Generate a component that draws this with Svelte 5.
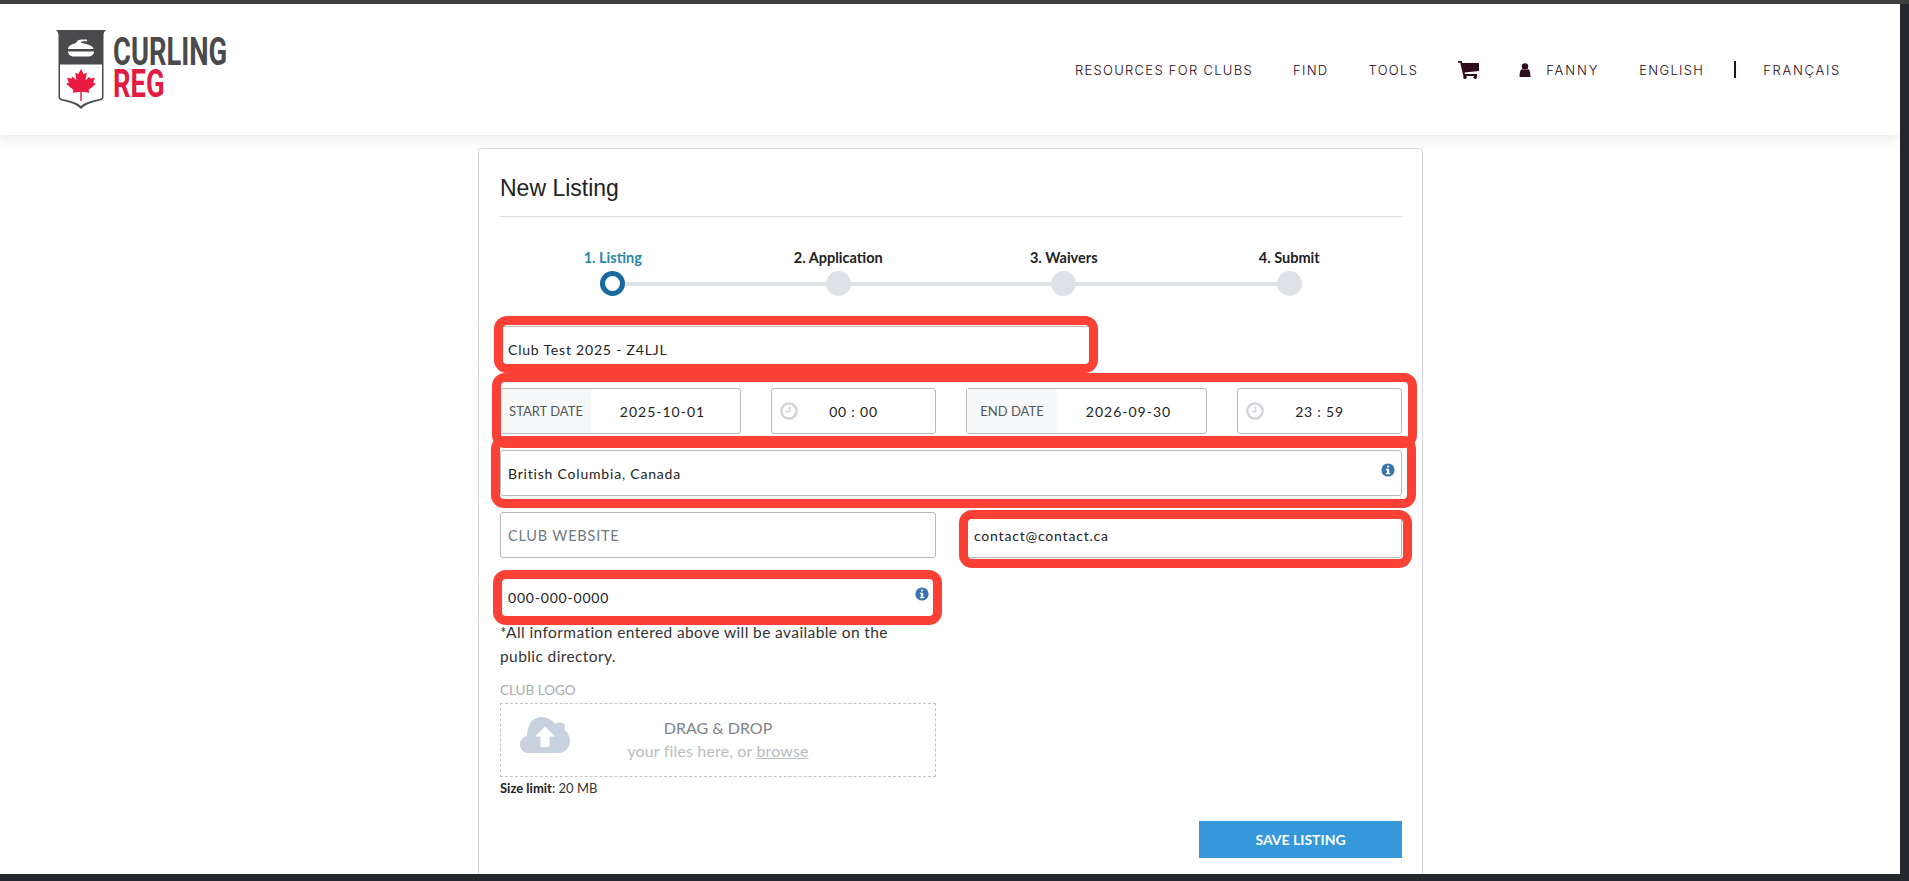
<script>
  const steps = ["1. Listing", "2. Application", "3. Waivers", "4. Submit"];
  const leaf =
    "25,39 27.8,44.2 30.8,42.6 29.5,50.6 33.3,46.6 34.2,48.6 38.9,47.8 37.2,52.7 40,53.8 32.5,60 33.4,62.7 25.7,61.8 25.7,71 24.3,71 24.3,61.8 16.6,62.7 17.5,60 10,53.8 12.8,52.7 11.1,47.8 15.8,48.6 16.7,46.6 20.5,50.6 19.2,42.6 22.2,44.2";
</script>

{#snippet clock()}
  <svg class="clock" viewBox="0 0 18 18" aria-hidden="true">
    <circle cx="9" cy="9" r="7.6" fill="none" stroke="#cdd1d5" stroke-width="2.2" />
    <path d="M9.600 4.500V9.600H5.500" fill="none" stroke="#cdd1d5" stroke-width="1.400" />
  </svg>
{/snippet}

{#snippet info()}
  <svg class="info" viewBox="0 0 14 14" aria-hidden="true">
    <circle cx="7" cy="7" r="6.600" fill="#3a74ae" />
    <rect x="5.900" y="2.400" width="2.200" height="2.200" rx="1" fill="#fff" />
    <path d="M4.900 5.700H8.200V9.900H9.200V11.300H4.900V9.900H5.900V7.100H4.900z" fill="#fff" />
  </svg>
{/snippet}

<div class="window">
  <div class="topbar"></div>
  <div class="page">
    <header>
      <a class="logo" href="#top">
        <svg width="50" height="80" viewBox="0 0 50 80" aria-hidden="true">
          <path
            d="M0 0H50c-1.500 1-2.500 3-2.500 5v62c0 2-1 3-3 3.500-7 1.500-14 3-19.500 8.500-5.500-5.500-12.500-7-19.500-8.500-2-.5-3-1.500-3-3.500V5C2.500 3 1.500 1 0 0z"
            fill="#4a4a4d" />
          <path
            d="M4 34.500H46V66.500c0 1.500-.7 2-2 2.500-7 1.500-14 2.500-19 7-5-4.500-12-5.500-19-7-1.300-.5-2-1-2-2.500z"
            fill="#fff" />
          <path
            d="M12 19c0-3 4-5 8-6 1-2.500 3-3.500 6-3.500h5v1.800h-4c-1.500 0-2 1-2 1.700 5 .5 12.500 2.800 12.500 6z"
            fill="#fff" />
          <path d="M12 21.500H38c0 3-3 5-6 5H18c-3 0-6-2-6-5z" fill="#fff" />
          <polygon points={leaf} fill="#e9193f" />
        </svg>
        <div class="wordmark">
          <span class="curling">CURLING</span>
          <span class="reg">REG</span>
        </div>
      </a>
      <nav>
        <a href="#top">RESOURCES FOR CLUBS</a>
        <a href="#top">FIND</a>
        <a href="#top">TOOLS</a>
        <svg class="cart" viewBox="0 0 21 18" aria-hidden="true">
          <path
            d="M0 0H3.600L4.300 2H21V10L6.600 11.500 7 13H19V15H5.400L2.200 1.800H0z"
            fill="#2f0c1d" />
          <circle cx="7" cy="16.300" r="1.700" fill="#2f0c1d" />
          <circle cx="17.300" cy="16.300" r="1.700" fill="#2f0c1d" />
        </svg>
        <a class="user" href="#top">
          <svg viewBox="0 0 12 14" aria-hidden="true">
            <circle cx="6" cy="3.500" r="3.200" fill="#2f0c1d" />
            <path d="M3 6C1 7 .5 10 .5 14H11.500C11.500 10 11 7 9 6 7.500 7.300 4.500 7.300 3 6z" fill="#2f0c1d" />
          </svg>
          FANNY
        </a>
        <div class="lang">
          <a href="#top">ENGLISH</a>
          <span class="sep"></span>
          <a class="fr" href="#top">FRANÇAIS</a>
        </div>
      </nav>
    </header>

    <main class="card">
      <h1>New Listing</h1>
      <div class="steps">
        {#each steps as step, i}
          <div class="step" class:active={i === 0}>
            <div class="step-label">{step}</div>
            <div class="dot"></div>
          </div>
        {/each}
      </div>

      <div class="form">
        <div class="field title-field mark mark-title">Club Test 2025 - Z4LJL</div>

        <div class="dates mark mark-dates">
          <div class="pair">
            <div class="field date">
              <span class="addon">START DATE</span>
              <span class="value">2025-10-01</span>
            </div>
            <div class="field time">{@render clock()}<span>00 : 00</span></div>
          </div>
          <div class="pair">
            <div class="field date">
              <span class="addon">END DATE</span>
              <span class="value">2026-09-30</span>
            </div>
            <div class="field time">{@render clock()}<span>23 : 59</span></div>
          </div>
        </div>

        <div class="field mark mark-location">British Columbia, Canada{@render info()}</div>

        <div class="two">
          <div class="field placeholder">CLUB WEBSITE</div>
          <div class="field mark mark-email">contact@contact.ca</div>
        </div>

        <div class="two">
          <div class="field mark mark-phone">000-000-0000{@render info()}</div>
        </div>
      </div>

      <div class="lower">
        <p class="note">*All information entered above will be available on the public directory.</p>
        <div class="logo-label">CLUB LOGO</div>
        <div class="drop">
          <svg class="cloud" viewBox="0 0 50 36" aria-hidden="true">
            <path
              d="M8 36C3 36 0 32 0 27.500 0 23 3 20 7 19 7 8 13 0 21 0 27 0 32 3 35 7 36 6 38 5.500 40 5.500 44 5.500 46 9 44.500 13 47.500 15 50 19 50 24 50 31 45 36 39 36z"
              fill="#c8d2de" />
            <path d="M25 9.500L35 19.500H29.500V30H20.500V19.500H15z" fill="#fff" />
          </svg>
          <div class="drag">DRAG &amp; DROP</div>
          <div class="browse">your files here, or <u>browse</u></div>
        </div>
        <div class="limit"><b>Size limit</b>: 20 MB</div>
      </div>

      <div class="actions">
        <button>SAVE LISTING</button>
      </div>
    </main>
  </div>
  <div class="scrollbar"></div>
  <div class="bottombar"></div>
</div>

<style>
  :global(body) {
    overflow: hidden;
    background: #fff;
  }

  .window {
    display: grid;
    grid-template-columns: 1fr 9px;
    grid-template-rows: 4px 870px 7px;
    height: 881px;
    font-family: Lato, "Noto Sans", sans-serif;
    color: #222;
  }

  .topbar {
    grid-column: 1 / 3;
    background: #3e3e3e;
  }

  .page {
    overflow: hidden;
    background: #fff;
  }

  .scrollbar {
    background: #24282c;
  }

  .bottombar {
    grid-column: 1 / 3;
    background: #24282c;
  }

  header {
    height: 131px;
    padding: 0 59px 0 56px;
    display: flex;
    align-items: center;
    justify-content: space-between;
    background: #fff;
    box-shadow: 0 2px 14px rgba(0, 0, 0, 0.1);
    position: relative;
  }

  .logo {
    display: flex;
    align-items: center;
    gap: 7px;
    text-decoration: none;
  }

  .wordmark {
    display: flex;
    flex-direction: column;
    margin-top: -3px;
    width: 114px;
    font-family: Roboto, sans-serif;
    font-weight: 700;
    font-size: 38px;
    line-height: 32px;
  }

  .wordmark span {
    display: block;
    transform: scaleX(0.72);
    transform-origin: left center;
    white-space: nowrap;
  }

  .curling {
    color: #4a4a4d;
  }

  .reg {
    color: #e31b41;
  }

  nav {
    display: flex;
    align-items: center;
    gap: 40px;
    font-family: Inter, sans-serif;
    font-weight: 300;
    font-size: 13px;
    letter-spacing: 1.3px;
    color: #1f0712;
  }

  nav a {
    color: inherit;
    text-decoration: none;
    white-space: nowrap;
  }

  .cart {
    width: 21px;
    height: 18px;
  }

  .user {
    display: flex;
    align-items: center;
    gap: 15px;
    letter-spacing: 1.9px;
  }

  .user svg {
    width: 12px;
    height: 14px;
  }

  .lang {
    display: flex;
    align-items: center;
    gap: 30px;
  }

  .fr {
    margin-left: -3px;
    letter-spacing: 1.7px;
  }

  .sep {
    width: 2px;
    height: 17px;
    background: #2f0c1d;
  }

  .card {
    width: 945px;
    box-sizing: border-box;
    margin: 13px 0 0 calc(50% - 472px);
    padding: 0 20px 0 21px;
    height: 760px;
    border: 1px solid #d6dade;
    border-radius: 3px;
    background: #fff;
  }

  h1 {
    margin: 0;
    height: 67px;
    box-sizing: content-box;
    border-bottom: 1px solid #dcdfe2;
    font-family: "Liberation Sans", Arial, sans-serif;
    font-weight: 400;
    font-size: 23px;
    line-height: 79px;
    color: #222;
  }

  .steps {
    display: grid;
    grid-template-columns: repeat(4, 1fr);
    margin-top: 32px;
  }

  .step {
    display: flex;
    flex-direction: column;
    align-items: center;
    position: relative;
  }

  .step:not(:last-child)::after {
    content: "";
    position: absolute;
    left: 50%;
    width: 100%;
    top: 33px;
    height: 4px;
    background: #e1e4e6;
  }

  .step-label {
    height: 18px;
    line-height: 18px;
    font-size: 14.500px;
    font-weight: 700;
    color: #222;
  }

  .step.active .step-label {
    color: #2a86a8;
  }

  .dot {
    margin-top: 4px;
    width: 25px;
    height: 25px;
    box-sizing: border-box;
    border-radius: 50%;
    background: #dee2e6;
    position: relative;
    z-index: 1;
  }

  .step.active .dot {
    background: #fff;
    border: 5px solid #19689f;
  }

  .form {
    margin-top: 30px;
    display: flex;
    flex-direction: column;
    gap: 16px;
  }

  .field {
    height: 46px;
    box-sizing: border-box;
    padding: 0 7px;
    display: flex;
    align-items: center;
    position: relative;
    border: 1px solid #b7b9bc;
    border-radius: 3px;
    background: #fff;
    font-size: 14px;
    letter-spacing: 0.8px;
    color: #222;
  }

  .title-field {
    width: 592px;
  }

  .dates,
  .two {
    display: grid;
    grid-template-columns: 436px 436px;
    gap: 30px;
  }

  .pair {
    display: grid;
    grid-template-columns: 241px 165px;
    gap: 30px;
  }

  .date {
    padding: 0;
  }

  .addon {
    width: 90px;
    height: 100%;
    flex: none;
    display: flex;
    align-items: center;
    justify-content: center;
    background: #f7f8fa;
    font-size: 13px;
    letter-spacing: 0;
    color: #555;
  }

  .value {
    flex: 1;
    text-align: center;
    padding-right: 6px;
    letter-spacing: 1px;
  }

  .time {
    justify-content: center;
    letter-spacing: 0.8px;
  }

  .clock {
    position: absolute;
    left: 8px;
    top: 13px;
    width: 18px;
    height: 18px;
  }

  .info {
    position: absolute;
    right: 6px;
    top: 12px;
    width: 14px;
    height: 14px;
  }

  .placeholder {
    color: #6f7a85;
    font-size: 14.500px;
    font-weight: 400;
  }

  /* red review marks drawn over the fields */
  .mark {
    position: relative;
  }

  .mark::after {
    content: "";
    position: absolute;
    box-sizing: border-box;
    border: 9px solid #fb4135;
    border-radius: 13px;
    pointer-events: none;
    z-index: 2;
  }

  .mark-title::after {
    left: -7px;
    right: -7px;
    top: -11px;
    bottom: -2px;
  }

  .mark-dates::after {
    left: -8px;
    right: -15px;
    top: -15px;
    bottom: -14px;
  }

  .mark-location::after {
    left: -10px;
    right: -15px;
    top: -15px;
    bottom: -13px;
  }

  .mark-email::after {
    left: -8px;
    right: -11px;
    top: -3px;
    bottom: -11px;
  }

  .mark-phone::after {
    left: -8px;
    right: -7px;
    top: -5px;
    bottom: -6px;
  }

  .lower {
    width: 436px;
  }

  .note {
    margin: 0;
    padding-right: 30px;
    font-size: 15.500px;
    line-height: 24px;
    color: #333;
    letter-spacing: 0.4px;
  }

  .logo-label {
    margin-top: 14px;
    height: 16px;
    line-height: 16px;
    font-size: 13.500px;
    color: #a8abae;
  }

  .drop {
    margin-top: 5px;
    height: 74px;
    box-sizing: border-box;
    position: relative;
    border: 1px dashed #c2c5c8;
    text-align: center;
  }

  .cloud {
    position: absolute;
    left: 19px;
    top: 13px;
    width: 50px;
    height: 36px;
  }

  .drag {
    margin-top: 13px;
    font-size: 16px;
    line-height: 22px;
    color: #7f8489;
  }

  .browse {
    font-size: 16px;
    line-height: 24px;
    letter-spacing: 0.15px;
    color: #b8bcc0;
  }

  .limit {
    margin-top: 4px;
    font-size: 13px;
    line-height: 15px;
    color: #333;
  }

  .limit b {
    color: #222;
  }

  .actions {
    display: flex;
    justify-content: flex-end;
    margin-top: 25px;
  }

  button {
    width: 203px;
    height: 37px;
    border: 0;
    background: #3498db;
    color: #fff;
    font-family: inherit;
    font-size: 14px;
    font-weight: 700;
  }
</style>
